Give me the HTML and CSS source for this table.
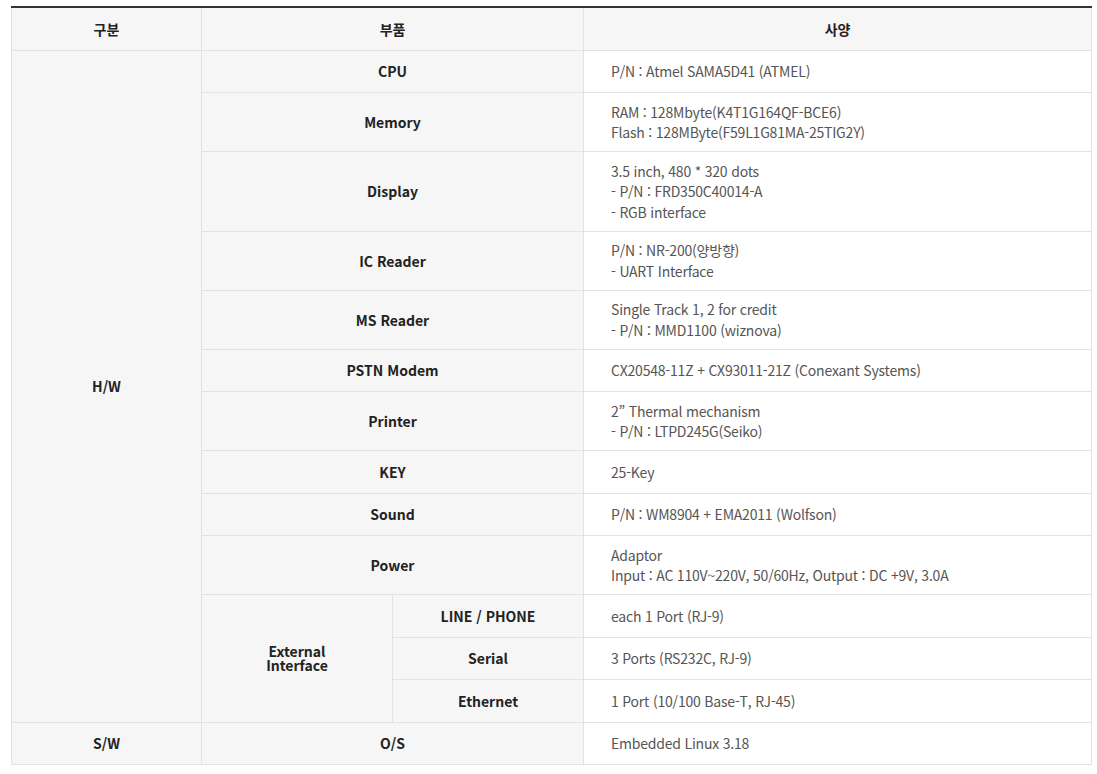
FILE: index.html
```html
<!DOCTYPE html>
<html lang="ko">
<head>
<meta charset="utf-8">
<title>Spec</title>
<link rel="stylesheet" href="styles.css">
</head>
<body>
<div class="wrap">
<table class="spec">
  <colgroup>
    <col class="c1"><col class="c2"><col class="c3"><col class="c4">
  </colgroup>
  <thead>
    <tr><th>구분</th><th colspan="2">부품</th><th>사양</th></tr>
  </thead>
  <tbody>
    <tr><th rowspan="13">H/W</th><th colspan="2">CPU</th><td>P/N : Atmel SAMA5D41 (ATMEL)</td></tr>
    <tr><th colspan="2">Memory</th><td>RAM : 128Mbyte(K4T1G164QF-BCE6)<br>Flash : 128MByte(F59L1G81MA-25TIG2Y)</td></tr>
    <tr><th colspan="2">Display</th><td>3.5 inch, 480 * 320 dots<br>- P/N : FRD350C40014-A<br>- RGB interface</td></tr>
    <tr><th colspan="2">IC Reader</th><td>P/N : NR-200(양방향)<br>- UART Interface</td></tr>
    <tr><th colspan="2">MS Reader</th><td>Single Track 1, 2 for credit<br>- P/N : MMD1100 (wiznova)</td></tr>
    <tr><th colspan="2">PSTN Modem</th><td>CX20548-11Z + CX93011-21Z (Conexant Systems)</td></tr>
    <tr><th colspan="2">Printer</th><td>2” Thermal mechanism<br>- P/N : LTPD245G(Seiko)</td></tr>
    <tr><th colspan="2">KEY</th><td>25-Key</td></tr>
    <tr><th colspan="2">Sound</th><td>P/N : WM8904 + EMA2011 (Wolfson)</td></tr>
    <tr><th colspan="2">Power</th><td>Adaptor<br>Input : AC 110V~220V, 50/60Hz, Output : DC +9V, 3.0A</td></tr>
    <tr><th rowspan="3" class="tight">External<br>Interface</th><th>LINE / PHONE</th><td>each 1 Port (RJ-9)</td></tr>
    <tr><th>Serial</th><td>3 Ports (RS232C, RJ-9)</td></tr>
    <tr><th>Ethernet</th><td>1 Port (10/100 Base-T, RJ-45)</td></tr>
    <tr><th>S/W</th><th colspan="2">O/S</th><td>Embedded Linux 3.18</td></tr>
  </tbody>
</table>
</div>
</body>
</html>
```

FILE: styles.css
```css
html, body {
  margin: 0;
  padding: 0;
  background: #fff;
}
.wrap {
  padding: 6px 6px 0 11px;
}
.spec {
  width: 1080px;
  border-collapse: collapse;
  table-layout: fixed;
  font-family: "Noto Sans CJK KR", "Noto Sans", sans-serif;
  font-size: 14px;
  border-top: 2px solid #333;
}
.c1 { width: 190px; }
.c2 { width: 191px; }
.c3 { width: 191px; }
.c4 { width: 508px; }
.spec th, .spec td {
  border: 1px solid #e2e2e2;
  height: 42.5px;
  box-sizing: border-box;
  vertical-align: middle;
}
.spec th {
  background: #f6f6f6;
  color: #222;
  font-weight: 700;
  text-align: center;
  line-height: 14px;
  padding: 6px 8px;
}
.spec thead th {
  height: 43px;
}
.spec td {
  color: #555;
  font-weight: 400;
  text-align: left;
  line-height: 20.5px;
  letter-spacing: -0.2px;
  padding: 8.5px 20px 8.5px 27px;
  background: #fff;
}
```
